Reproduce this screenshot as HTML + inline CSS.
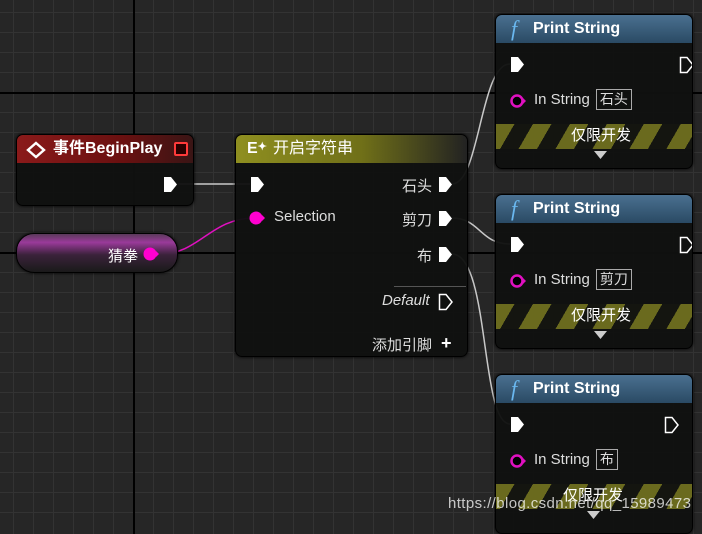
<!DOCTYPE html>
<html><head><meta charset="utf-8"><style>
*{margin:0;padding:0;box-sizing:border-box}
body{width:702px;height:525px;overflow:hidden;position:relative;font-family:"Liberation Sans","Noto Sans CJK SC",sans-serif;color:#e8e8e8;
background-color:#262626;
background-image:
linear-gradient(90deg,transparent 133px,#000 133px,#000 135px,transparent 135px),
linear-gradient(180deg,transparent 92px,#000 92px,#000 94px,transparent 94px),
linear-gradient(180deg,transparent 252px,#000 252px,#000 254px,transparent 254px),
repeating-linear-gradient(90deg,transparent 0 13px,#333 13px 14px,transparent 14px 20px),
repeating-linear-gradient(180deg,transparent 0 12px,#333 12px 13px,transparent 13px 20px);}
.node{position:absolute;background:rgba(16,17,16,.96);border:1px solid #000;border-radius:7px;box-shadow:0 0 3px #000;overflow:hidden}
.hdr{position:absolute;left:0;right:0;top:0;height:28px;font-weight:bold;font-size:16px;line-height:28px;color:#fff}
.t{position:absolute;font-size:15px;color:#ddd;white-space:nowrap}
.exec{position:absolute}
.hatch{position:absolute;left:0;right:0;height:25px;background:repeating-linear-gradient(120deg,#6a6a1e 0 16px,#141510 16px 32px)}
.box{display:inline-block;border:1px solid #aaa;padding:0 3px;font-size:14px;line-height:19px;margin-left:6px}
</style></head><body>
<svg width="702" height="525" style="position:absolute;left:0;top:0">
<g fill="none" stroke="#c8c8c8" stroke-width="1.5">
<path d="M178 184 L250 184"/>
<path d="M452 184 C480 184 480 64 510 64"/>
<path d="M452 218 C480 218 480 244 510 244"/>
<path d="M452 254 C490 254 480 424 510 424"/>
</g>
<path d="M160 254 C200 254 210 218 255 218" fill="none" stroke="#e010c0" stroke-width="1.5"/>
</svg>

<div class="node" style="left:16px;top:134px;width:178px;height:72px">
<div class="hdr" style="background:linear-gradient(90deg,#8a1a1a,#6a1010 60%,#3a1515);padding-left:36px">事件BeginPlay</div>
<svg style="position:absolute;left:9px;top:6px" width="20" height="18"><path d="M10 2 L18 9 L10 16 L2 9Z" fill="none" stroke="#fff" stroke-width="2.4"/></svg>
<div style="position:absolute;left:157px;top:7px;width:14px;height:14px;border:2px solid #ff3a3a;border-radius:2px;background:#2a0000"></div>
<svg class="exec" style="left:146px;top:41px" width="16" height="17"><path d="M1 1 H8 L14 8.5 L8 16 H1Z" fill="#fff"/></svg>
</div>

<div style="position:absolute;left:16px;top:233px;width:162px;height:40px;border-radius:18px;border:1px solid #000;background:linear-gradient(180deg,#5a3a5a 0,#9a3a9a 22%,#3a223a 55%,#1a1a1a 100%);box-shadow:0 0 3px #000"></div>
<div class="t" style="left:108px;top:245px;color:#fff">猜拳</div>
<svg style="position:absolute;left:142px;top:246px" width="20" height="16"><circle cx="8" cy="8" r="6.5" fill="#ff00d0"/><path d="M14 5 L17 8 L14 11Z" fill="#ff00d0"/></svg>

<div class="node" style="left:235px;top:134px;width:233px;height:223px">
<div class="hdr" style="background:linear-gradient(90deg,#8f8f20,#6f6f18 55%,#222 100%);padding-left:37px;font-weight:normal">开启字符串</div>
<div style="position:absolute;left:11px;top:5px;font-weight:bold;font-size:16px;color:#fff">E<span style="font-size:11px;vertical-align:top">✦</span></div>
<svg class="exec" style="left:14px;top:41px" width="16" height="17"><path d="M1 1 H8 L14 8.5 L8 16 H1Z" fill="#fff"/></svg>
<svg style="position:absolute;left:12px;top:75px" width="22" height="16"><circle cx="8" cy="8" r="6.5" fill="#ff00d0"/><path d="M14 5 L17 8 L14 11Z" fill="#ff00d0"/></svg>
<div class="t" style="left:38px;top:73px">Selection</div>
<div class="t" style="left:166px;top:40px">石头</div>
<svg class="exec" style="left:202px;top:41px" width="16" height="17"><path d="M1 1 H8 L14 8.5 L8 16 H1Z" fill="#fff"/></svg>
<div class="t" style="left:166px;top:74px">剪刀</div>
<svg class="exec" style="left:202px;top:75px" width="16" height="17"><path d="M1 1 H8 L14 8.5 L8 16 H1Z" fill="#fff"/></svg>
<div class="t" style="left:181px;top:110px">布</div>
<svg class="exec" style="left:202px;top:111px" width="16" height="17"><path d="M1 1 H8 L14 8.5 L8 16 H1Z" fill="#fff"/></svg>
<div style="position:absolute;left:158px;top:151px;width:72px;height:1px;background:#555"></div>
<div class="t" style="left:146px;top:157px;font-style:italic">Default</div>
<svg class="exec" style="left:202px;top:158px" width="16" height="18"><path d="M1.5 1.5 H8 L14 9 L8 16.5 H1.5Z" fill="none" stroke="#fff" stroke-width="1.5"/></svg>
<div class="t" style="left:136px;top:199px">添加引脚</div>
<div style="position:absolute;left:205px;top:200px;font-size:18px;font-weight:bold;color:#fff;line-height:16px">+</div>
</div>

<div class="node" style="left:495px;top:14px;width:198px;height:155px">
<div class="hdr" style="background:linear-gradient(180deg,#4a7090,#2a4a64);padding-left:37px">Print String</div>
<div style="position:absolute;left:15px;top:1px;font-family:'Liberation Serif',serif;font-style:italic;font-size:22px;color:#6ab8f0">f</div>
<svg class="exec" style="left:14px;top:41px" width="16" height="17"><path d="M1 1 H8 L14 8.5 L8 16 H1Z" fill="#fff"/></svg>
<svg class="exec" style="left:183px;top:41px" width="16" height="18"><path d="M1.5 1.5 H8 L14 9 L8 16.5 H1.5Z" fill="none" stroke="#fff" stroke-width="1.5"/></svg>
<svg style="position:absolute;left:13px;top:78px" width="22" height="16"><circle cx="8" cy="8" r="5.5" fill="#000" stroke="#e010c0" stroke-width="2.5"/><path d="M14 5 L17 8 L14 11Z" fill="#e010c0"/></svg>
<div class="t" style="left:38px;top:74px">In String<span class="box">石头</span></div>
<div class="hatch" style="top:109px"></div>
<div class="t" style="left:75px;top:109px;color:#fff">仅限开发</div>
<svg style="position:absolute;left:98px;top:136px" width="14" height="10"><path d="M0 0 H13 L6.5 8Z" fill="#ccc"/></svg>
</div>

<div class="node" style="left:495px;top:194px;width:198px;height:155px">
<div class="hdr" style="background:linear-gradient(180deg,#4a7090,#2a4a64);padding-left:37px">Print String</div>
<div style="position:absolute;left:15px;top:1px;font-family:'Liberation Serif',serif;font-style:italic;font-size:22px;color:#6ab8f0">f</div>
<svg class="exec" style="left:14px;top:41px" width="16" height="17"><path d="M1 1 H8 L14 8.5 L8 16 H1Z" fill="#fff"/></svg>
<svg class="exec" style="left:183px;top:41px" width="16" height="18"><path d="M1.5 1.5 H8 L14 9 L8 16.5 H1.5Z" fill="none" stroke="#fff" stroke-width="1.5"/></svg>
<svg style="position:absolute;left:13px;top:78px" width="22" height="16"><circle cx="8" cy="8" r="5.5" fill="#000" stroke="#e010c0" stroke-width="2.5"/><path d="M14 5 L17 8 L14 11Z" fill="#e010c0"/></svg>
<div class="t" style="left:38px;top:74px">In String<span class="box">剪刀</span></div>
<div class="hatch" style="top:109px"></div>
<div class="t" style="left:75px;top:109px;color:#fff">仅限开发</div>
<svg style="position:absolute;left:98px;top:136px" width="14" height="10"><path d="M0 0 H13 L6.5 8Z" fill="#ccc"/></svg>
</div>

<div class="node" style="left:495px;top:374px;width:198px;height:160px">
<div class="hdr" style="background:linear-gradient(180deg,#4a7090,#2a4a64);padding-left:37px">Print String</div>
<div style="position:absolute;left:15px;top:1px;font-family:'Liberation Serif',serif;font-style:italic;font-size:22px;color:#6ab8f0">f</div>
<svg class="exec" style="left:14px;top:41px" width="16" height="17"><path d="M1 1 H8 L14 8.5 L8 16 H1Z" fill="#fff"/></svg>
<svg class="exec" style="left:168px;top:41px" width="16" height="18"><path d="M1.5 1.5 H8 L14 9 L8 16.5 H1.5Z" fill="none" stroke="#fff" stroke-width="1.5"/></svg>
<svg style="position:absolute;left:13px;top:78px" width="22" height="16"><circle cx="8" cy="8" r="5.5" fill="#000" stroke="#e010c0" stroke-width="2.5"/><path d="M14 5 L17 8 L14 11Z" fill="#e010c0"/></svg>
<div class="t" style="left:38px;top:74px">In String<span class="box">布</span></div>
<div class="hatch" style="top:109px"></div>
<div class="t" style="left:67px;top:109px;color:#fff">仅限开发</div>
<svg style="position:absolute;left:91px;top:136px" width="14" height="10"><path d="M0 0 H13 L6.5 8Z" fill="#ccc"/></svg>
</div>

<div style="position:absolute;left:448px;top:495px;font-size:15px;letter-spacing:0.4px;color:rgba(255,255,255,.75);white-space:nowrap">https://blog.csdn.net/qq_15989473</div>
</body></html>
